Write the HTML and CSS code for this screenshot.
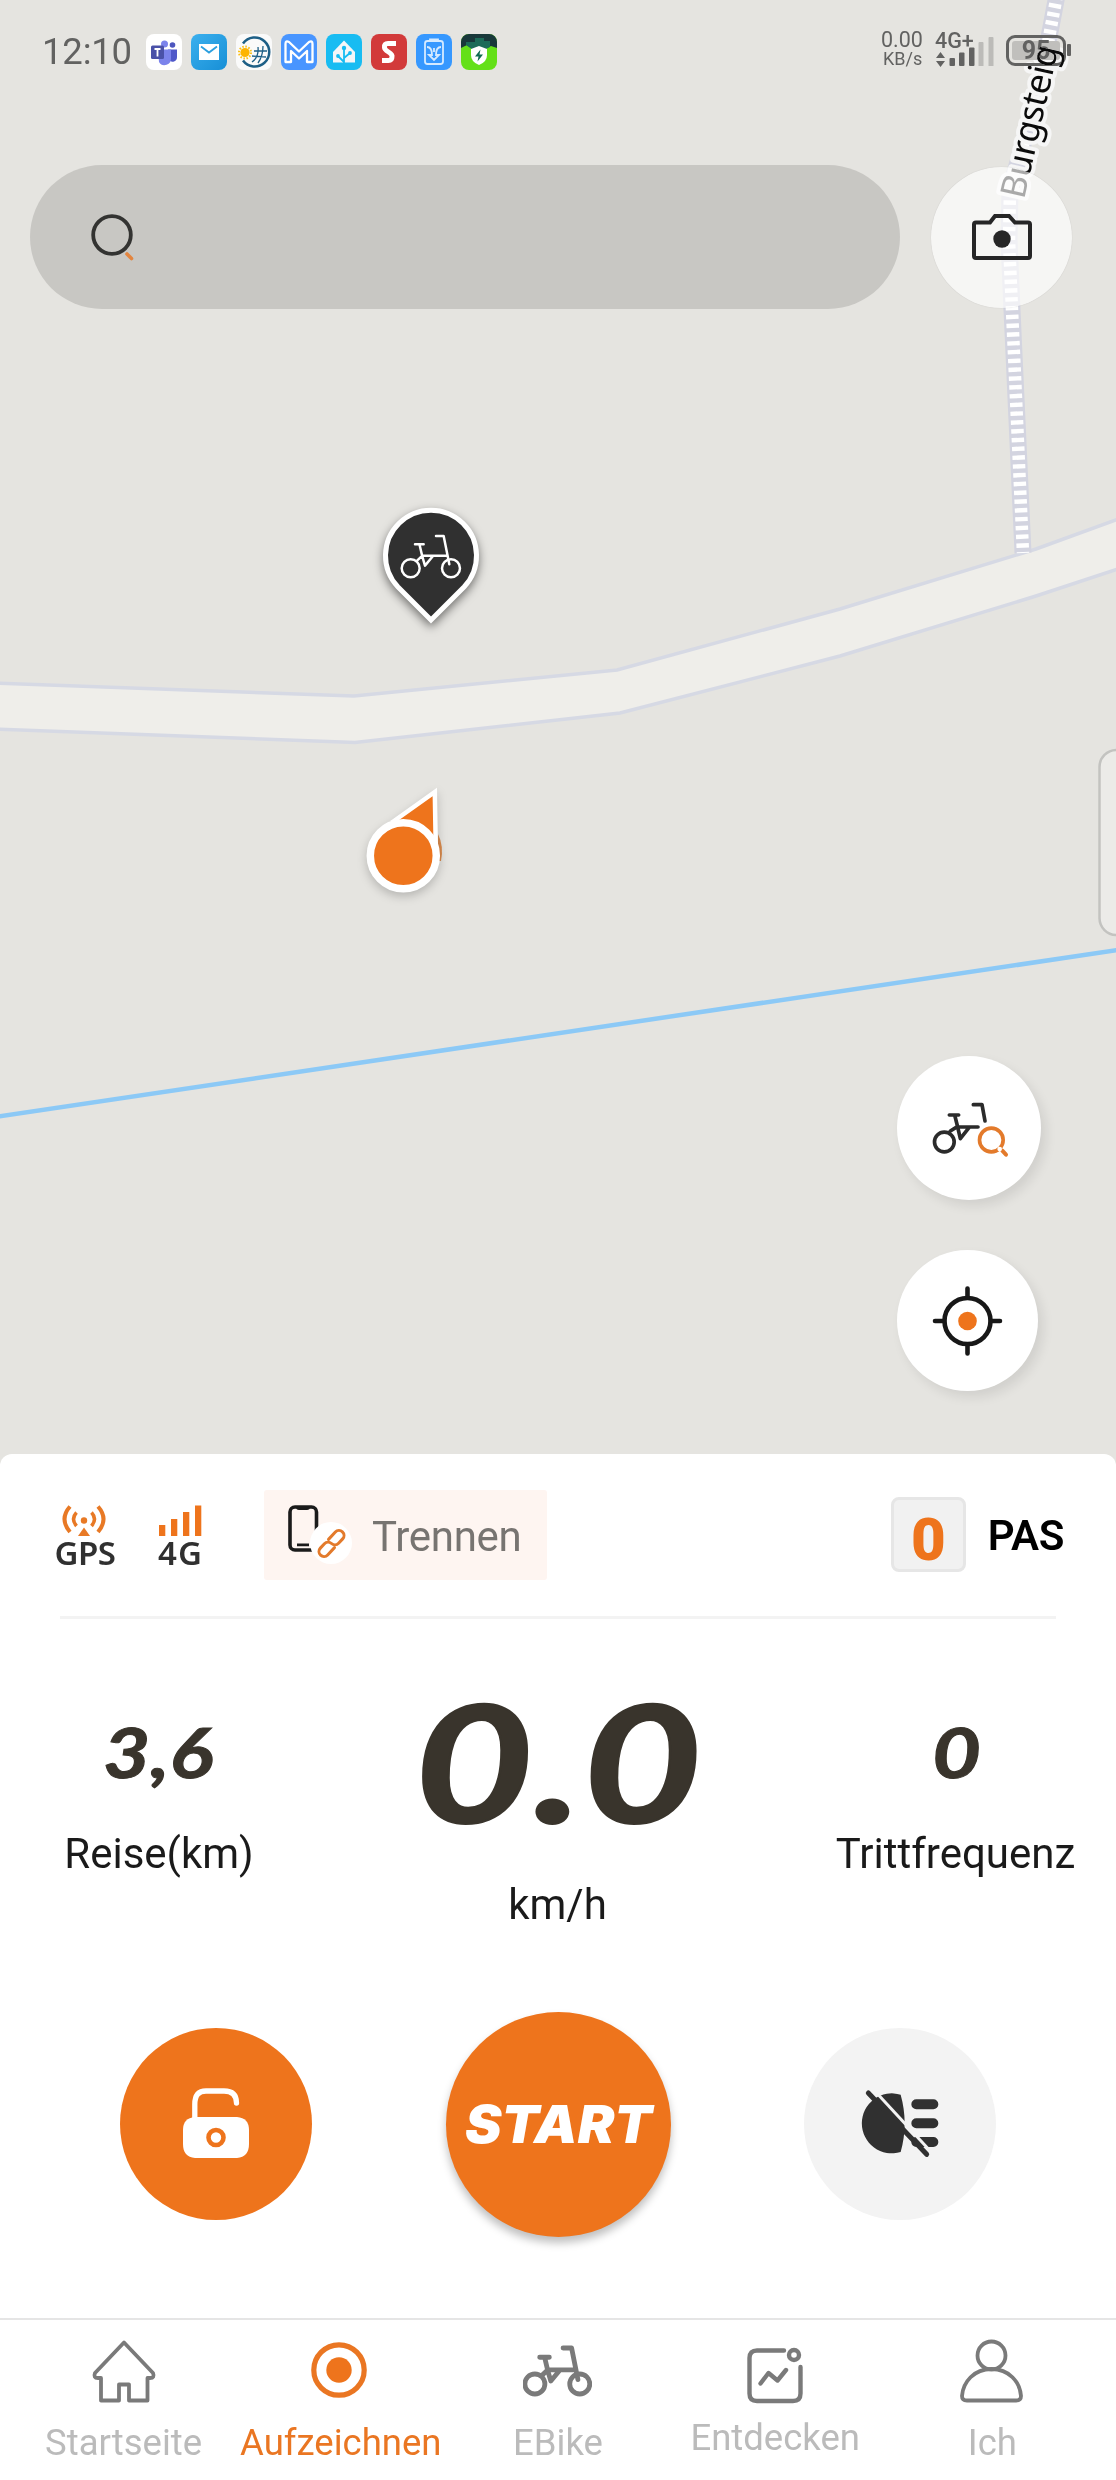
FILE: index.html
```html
<!DOCTYPE html>
<html lang="de">
<head>
<meta charset="utf-8">
<title>Aufzeichnen</title>
<link rel="stylesheet" href="styles.css">
</head>
<body>
<svg class="defs" width="0" height="0">
  <symbol id="bike" viewBox="180 159 186 142">
    <g fill="none" stroke="currentColor" stroke-width="var(--w)" stroke-linecap="round" stroke-linejoin="round">
      <circle cx="212" cy="265" r="27"/><circle cx="333" cy="265" r="27"/>
      <path d="M225 193h26M239 196l8 34 8 27 24-29M232 241l15-14h75M288 168h23l17 85"/>
    </g>
  </symbol>
</svg>

<section class="map">
  <svg class="map-canvas" viewBox="0 0 1116 1454">
    <path d="M-5 683 354 696 617 670 840 609 1036 549 1121 518V568L1036 596 840 656 620 713 355 742.500-5 729Z" fill="#efeeea" stroke="#d6d9e4" stroke-width="3.500"/>
    <g fill="none">
      <path d="M1057-5 1040 85 1010 190 1009 240 1012 310 1023 553" stroke="#d3d4e0" stroke-width="17"/>
      <path d="M1057-5 1040 85 1010 190 1009 240 1012 310 1023 553" stroke="#fff" stroke-width="12.500" stroke-dasharray="4.400 4.400"/>
      <path d="M-5 1117 1121 949.500" stroke="#8cc9f6" stroke-width="4.500"/>
    </g>
    <path id="street" d="M1024 200 1074-20" fill="none"/>
    <text class="street"><textPath href="#street" textLength="156">Burgsteig</textPath></text>
    <rect x="1099.500" y="750" width="40" height="185" rx="17" fill="#eceBe8" stroke="#c3c3c0" stroke-width="2.500"/>
    <g class="pin">
      <path d="M431 620 398 587A45.500 45.500 0 1 1 464 587Z" fill="#303030" stroke="#fff" stroke-width="5"/>
      <use href="#bike" x="400" y="533" width="62" height="47.300" color="#fff" style="--w:7.500"/>
    </g>
    <g>
      <path d="M438 834q6 12 3 27l-4 0Z" fill="#d98a4c"/>
      <g class="dot">
        <path d="M394 821 434.800 792 435.800 850Z" fill="#ee741c" stroke="#fff" stroke-width="4.500"/>
        <circle cx="403.300" cy="855.700" r="33" fill="#ee741c" stroke="#fff" stroke-width="7.500"/>
      </g>
    </g>
  </svg>

  <header class="status">
    <span class="clock">12:10</span>
    <div class="apps">
      <svg viewBox="0 0 36 36"><rect width="36" height="36" rx="8" fill="#fff"/><circle cx="18.500" cy="10" r="3.500" fill="#7b83eb"/><circle cx="26.500" cy="11" r="2.800" fill="#4d56be"/><path d="M22 15.500h9V23a4.500 4.500 0 0 1-8 3z" fill="#4f58c9"/><path d="M12 15.500h13V24a6.500 6.500 0 0 1-12 4z" fill="#7b83eb"/><rect x="5" y="11.500" width="13" height="13.500" rx="1.500" fill="#4a51a8"/><path d="M8.500 15h6M11.500 15v7.500" stroke="#fff" stroke-width="1.800"/></svg>
      <svg viewBox="0 0 36 36"><defs><linearGradient id="mail" x2="1" y2="1"><stop stop-color="#3bb0ee"/><stop offset="1" stop-color="#178fd6"/></linearGradient></defs><rect width="36" height="36" rx="8" fill="url(#mail)"/><path d="M8 10h20v16H8z" fill="#fff"/><path d="M10 12.500l8 6 8-6" fill="none" stroke="#2a9fdf" stroke-width="1.800"/></svg>
      <svg viewBox="0 0 36 36"><rect width="36" height="36" rx="8" fill="#fafafa"/><g fill="none" stroke="#1d5f86"><path d="M7 9.500A14.500 14.500 0 1 1 7 26.500" stroke-width="2.500"/><path d="M18 17h13M16 22l14 1M22 13q1 10-6 15M27 12q0 10-5 17" stroke-width="1.300"/></g><circle cx="9" cy="18.500" r="6" fill="none" stroke="#fdbf0f" stroke-width="2" stroke-dasharray="1.500 1.600"/><circle cx="9" cy="18.500" r="4.600" fill="#fdb400"/></svg>
      <svg viewBox="0 0 36 36"><rect width="36" height="36" rx="8" fill="#4895ff"/><path d="M4.500 28V10q0-4 3.500-2l10 9.500L28 8q3.500-2 3.500 2v18h-5.500V17l-8 7.500-8-7.500v11z" fill="none" stroke="#fff" stroke-width="2.300" stroke-linejoin="round"/></svg>
      <svg viewBox="0 0 36 36"><rect width="36" height="36" rx="8" fill="#18bcf2"/><path d="M18 6.500 29 18v10.500H7V18z" fill="#f4f6f8" stroke-linejoin="round"/><g fill="none" stroke="#18bcf2" stroke-width="1.800"><path d="M18 29V15M18 28l-6-6M18 24l6-5"/></g><g fill="#18bcf2"><circle cx="18" cy="14" r="2.200"/><circle cx="12" cy="22" r="1.900"/><circle cx="24" cy="19" r="1.900"/></g></svg>
      <svg viewBox="0 0 36 36"><rect width="36" height="36" rx="8" fill="#d23a3a"/><path d="M25 9.500H17q-4 0-3.500 4 0 2 4 4.500t3.500 4.500q0 4-3.500 4H11" fill="none" stroke="#fff" stroke-width="5"/></svg>
      <svg viewBox="0 0 36 36"><rect width="36" height="36" rx="8" fill="#3698ff"/><g fill="none" stroke="#d5eaff" stroke-width="1.800"><path d="M14 7V5.500h8V7"/><rect x="9" y="7" width="18" height="23" rx="2.500"/><path d="M11 13q5 0 5 8h-3l5 5 5-5h-3q0-8 5-8M18 14v4"/></g></svg>
      <svg viewBox="0 0 36 36"><rect width="36" height="36" rx="8" fill="#64e018"/><path d="M0 14V8a8 8 0 0 1 8-8h20a8 8 0 0 1 8 8v6l-6-2-7 3H12l-6-4z" fill="#18383a"/><path d="M14 4h9v3h6v6l-6 3H12L5 11V8h9z" fill="#1c6b58"/><path d="M18 12l8 3v6q0 7-8 10-8-3-8-10v-6z" fill="#fff"/><path d="M19.500 15.500l-5.500 7h3.500l-1 5 5.500-7h-3.500z" fill="#116b54"/></svg>
    </div>
    <div class="signals">
      <div class="rate"><span>0.00</span><small>KB/s</small></div>
      <div class="cell">
        <span>4G+</span>
        <svg width="46" height="32" viewBox="0 0 46 32"><g fill="#626261"><path d="M4.500 17l4.500 6H0zM0 26h9l-4.500 6z"/><rect x="13.500" y="23" width="5.500" height="8" rx="1"/><rect x="23" y="17.500" width="5.500" height="13.500" rx="1"/><rect x="33" y="12.500" width="5.500" height="18.500" rx="1"/></g></svg>
        <svg class="weak" width="16" height="30" viewBox="0 0 16 30"><path d="M.5 6q0-1 1-1h3q1 0 1 1v23H.5zM10.500 1q0-1 1-1h3q1 0 1 1v28h-5z" fill="#bcbbb8"/></svg>
      </div>
      <div class="battery"><span>95</span></div>
    </div>
  </header>

  <div class="search-row">
    <div class="search">
      <svg width="46" height="50" viewBox="0 0 46 50"><circle cx="22" cy="23" r="18.800" fill="none" stroke="#333331" stroke-width="3.800"/><path d="M37 42l4.500 4.500" stroke="#e3853f" stroke-width="3.600" stroke-linecap="round"/></svg>
    </div>
    <button class="camera">
      <svg width="60" height="48" viewBox="0 0 60 48"><path d="M4 9.500H18L23 3H37L43 9.500H56Q58 9.500 58 11.500V43Q58 45 56 45H4Q2 45 2 43V11.500Q2 9.500 4 9.500Z" fill="none" stroke="#262626" stroke-width="4"/><circle cx="30" cy="26" r="8.700" fill="#262626"/></svg>
    </button>
  </div>

  <div class="floating">
    <button class="find">
      <svg width="76" height="56" viewBox="213 215 228 168" fill="none" stroke-linecap="round" stroke-linejoin="round">
        <g stroke="#2b2b2b" stroke-width="11"><circle cx="253" cy="341" r="29.500"/><path d="M268 260h28M284 260l9 36 8 35 26-33M271 308l21-13M294 296h60M340 229h26l9 49"/></g>
        <g stroke="#e37a2b"><circle cx="394" cy="335" r="35.500" stroke-width="11"/><path d="M427 367l11 12" stroke-width="12"/></g><circle cx="419" cy="362" r="7" fill="#fff"/>
      </svg>
    </button>
    <button class="locate">
      <svg width="70" height="70" viewBox="0 0 70 70"><g fill="none" stroke="#181818" stroke-width="4.600" stroke-linecap="round"><circle cx="34.500" cy="35" r="23"/><path d="M34.500 2.500v9M34.500 58.500v9M2 35h9M58 35h9"/></g><circle cx="34.500" cy="35" r="9.300" fill="#ee741c"/></svg>
    </button>
  </div>
</section>

<main class="sheet">
  <div class="device">
    <div class="tag gps">
      <svg width="44" height="31" viewBox="1 0 44 31"><g fill="none" stroke="#e87925" stroke-width="4"><path d="M8 1.500Q-3 14 8 27M36 1.500q11 12.500 0 25.500"/><path d="M14.500 7.500q-6 6.500 0 13.500M29.500 7.500q6 6.500 0 13.500" stroke-width="3.500"/></g><circle cx="22" cy="15.500" r="3.200" fill="#e87925"/><path d="M22 22.500l6 8.500H16z" fill="#e87925"/></svg>
      <span>GPS</span>
    </div>
    <div class="tag lte">
      <svg width="44" height="31" viewBox="0 0 44 31" fill="#ee741c"><path d="M1 20h6.300v11H1zM13 14h6.300v17H13zM25 7h6.300v24H25zM37 .5h6.300V31H37z"/></svg>
      <span>4G</span>
    </div>
    <button class="disconnect">
      <svg width="66" height="62" viewBox="0 0 66 62"><rect x="2" y="3" width="26.500" height="43" rx="5" fill="none" stroke="#1b1b1b" stroke-width="3.600"/><path d="M8 3h14q0 3-3 3h-8q-3 0-3-3zM9 39.500h12v2.800H9z" fill="#1b1b1b"/><circle cx="43" cy="39" r="21" fill="#fff"/><g transform="translate(43.500 39.500) rotate(-47)" fill="none" stroke="#e37a2b" stroke-width="3" stroke-linecap="round"><path d="M-1 5h-10a5 5 0 0 1 0-10h6a5 5 0 0 1 5 5M1-5h10a5 5 0 0 1 0 10h-6a5 5 0 0 1-5-5"/></g></svg>
      <span>Trennen</span>
    </button>
    <div class="assist"><b>0</b><span>PAS</span></div>
  </div>

  <div class="stats">
    <div class="stat trip">
      <svg width="124" height="70"><text x="6" y="55" textLength="110" lengthAdjust="spacingAndGlyphs">3,6</text></svg>
      <span>Reise(km)</span>
    </div>
    <div class="stat speed">
      <svg width="300" height="150"><text x="6" y="135.500" textLength="288" lengthAdjust="spacingAndGlyphs">0.0</text></svg>
      <span>km/h</span>
    </div>
    <div class="stat cadence">
      <svg width="60" height="70"><text x="6" y="55" textLength="49" lengthAdjust="spacingAndGlyphs">0</text></svg>
      <span>Trittfrequenz</span>
    </div>
  </div>

  <div class="actions">
    <button class="round lock">
      <svg width="66" height="70" viewBox="0 1 66 70"><path d="M11.800 34V16.500Q11.800 3 23 3H41Q53.500 3 53.500 15" fill="none" stroke="#fff" stroke-width="5.300" stroke-linecap="round"/><path d="M12 29H54Q66 30 66 42V56Q66 69 54 70H12Q0 69 0 56V42Q0 30 12 29Z" fill="#fff"/><circle cx="33" cy="49.500" r="7.500" fill="#fff" stroke="#ee741c" stroke-width="4.600"/></svg>
    </button>
    <button class="round start"><svg width="200" height="60"><text x="7" y="49" textLength="187" lengthAdjust="spacingAndGlyphs">START</text></svg></button>
    <button class="round light">
      <svg width="80" height="68" viewBox="242 270 240 204"><path d="M364 284Q388 370 364 456A90 90 0 1 1 364 284Z" fill="#303030"/><g stroke="#303030" stroke-width="30" stroke-linecap="round"><path d="M411 313h51M411 370h51M411 426h51"/></g><path d="M290 277l160 173" stroke="#f3f3f3" stroke-width="9"/><path d="M267 279l175 184" stroke="#303030" stroke-width="15" stroke-linecap="round"/></svg>
    </button>
  </div>
</main>

<nav class="tabs">
  <a class="tab"><svg width="64" height="64" viewBox="0 0 64 64"><path d="M32 3.500 61 34q2 5-3 5H55.500V61.500H37V45.500H27V61.500H9V39H6q-5 0-3-5Z" fill="none" stroke="#7a7a7a" stroke-width="3.800" stroke-linejoin="round"/></svg><span>Startseite</span></a>
  <a class="tab active"><svg width="64" height="64" viewBox="0 0 64 64"><circle cx="30" cy="31" r="25.200" fill="none" stroke="#ea7622" stroke-width="5.200"/><circle cx="30" cy="31" r="12.700" fill="#ee741c"/></svg><span>Aufzeichnen</span></a>
  <a class="tab"><svg width="72" height="64" viewBox="0 0 72 64"><use href="#bike" x="1" y="5.500" width="69" height="53" style="--w:13"/></svg><span>EBike</span></a>
  <a class="tab raised"><svg width="64" height="64" viewBox="0 0 64 64" fill="none" stroke="#7a7a7a" stroke-width="4.400" stroke-linecap="round" stroke-linejoin="round"><path d="M41 11.500H14Q6.500 11.500 6.500 19V54.500Q6.500 62 14 62H50Q57.500 62 57.500 54.500V28M17.500 44.500 25.500 34l9 7.500L43 31"/><circle cx="51" cy="16" r="5"/></svg><span>Entdecken</span></a>
  <a class="tab"><svg width="64" height="64" viewBox="0 0 64 64" fill="none" stroke="#7a7a7a" stroke-width="3.800"><circle cx="31.500" cy="16.500" r="14"/><path d="M31.500 30C14 30 3 43 2 57q0 4.500 5 4.500H56q5 0 5-4.500C60 43 49 30 31.500 30Z"/></svg><span>Ich</span></a>
</nav>
</body>
</html>
```

FILE: styles.css
```css
* { box-sizing: border-box; }
body {
  margin: 0;
  width: 1116px;
  height: 2480px;
  display: flex;
  flex-direction: column;
  overflow: hidden;
  background: #e5e4e0;
  font-family: Roboto, "Liberation Sans", sans-serif;
  color: #1a1a1a;
}
button { border: 0; padding: 0; font: inherit; display: flex; align-items: center; justify-content: center; }
svg { display: block; flex: none; overflow: visible; }
.defs { position: absolute; }

.map { position: relative; height: 1454px; flex: none; display: flex; flex-direction: column; }
.map-canvas { position: absolute; inset: 0; width: 1116px; height: 1454px; overflow: hidden; }
.street { font: 35px "Noto Sans", sans-serif; fill: #0b0b0b; stroke: #f6f6f6; stroke-width: 8px; stroke-linejoin: round; paint-order: stroke; }
.pin { filter: drop-shadow(0 4px 5px rgba(0, 0, 0, .5)); }
.dot { filter: drop-shadow(0 4px 5px rgba(0, 0, 0, .2)); }

.status { position: relative; height: 104px; padding: 0 45px 0 42px; display: flex; align-items: center; color: #626261; }
.clock { width: 104px; margin-top: -1px; font-size: 36.5px; letter-spacing: -.2px; }
.apps { display: flex; gap: 9px; }
.apps svg { width: 36px; height: 36px; }
.signals { margin-left: auto; height: 36px; display: flex; align-items: center; }
.rate { width: 54px; margin-top: -6px; display: flex; flex-direction: column; font-size: 21.5px; line-height: 20px; }
.rate small { font-size: 18px; line-height: 18px; padding-left: 2px; }
.cell { width: 71px; height: 32px; margin-top: -3px; display: flex; align-items: flex-end; position: relative; }
.cell > span { position: absolute; left: 0; top: -6px; font-size: 21.5px; line-height: 24px; font-weight: 500; }
.cell svg { margin-left: 1px; }
.cell .weak { margin-left: -4px; }
.battery { position: relative; width: 60px; height: 31px; margin: -4px 5px 0 0; padding: 3px; border: 3px solid #626261; border-radius: 9px; background: #c0bfbc; background-clip: content-box; display: flex; align-items: center; justify-content: center; font-size: 25px; font-weight: 700; mix-blend-mode: darken; }
.battery::after { content: ""; position: absolute; left: 58px; top: 6px; width: 4px; height: 12px; border-radius: 1px; background: #626261; }

.search-row { position: relative; margin-top: 61px; padding-left: 30px; display: flex; align-items: center; gap: 31px; }
.search { width: 870px; height: 144px; padding-left: 60px; border-radius: 72px; background: #c8c7c3; display: flex; align-items: center; }
.camera { width: 141px; height: 141px; border-radius: 50%; background: rgba(255, 255, 255, .65); box-shadow: 0 0 1px rgba(0, 0, 0, .2); }

.floating { position: relative; margin: 747px 0 0 897px; display: flex; flex-direction: column; gap: 50px; }
.floating button { border-radius: 50%; background: #fff; box-shadow: 5px 6px 12px rgba(0, 0, 0, .09); }
.floating .find { width: 144px; height: 144px; }
.floating .locate { width: 141px; height: 141px; }

.sheet { height: 864px; flex: none; background: #fff; border-radius: 12px 12px 0 0; }
.device { height: 165px; margin: 0 52px 0 54px; padding-top: 36px; display: flex; align-items: flex-start; position: relative; }
.device::after { content: ""; position: absolute; left: 6px; right: 8px; bottom: 0; height: 3px; background: #f3f3f3; }
.tag { padding-top: 15px; display: flex; flex-direction: column; align-items: center; font: 600 33px/36px "Noto Sans", sans-serif; color: #303030; }
.tag span { margin-top: -1px; }
.gps { width: 62px; }
.gps span { letter-spacing: -.5px; }
.lte { width: 46px; margin-left: 41px; }
.lte span { letter-spacing: 1px; margin-right: -1px; }
.disconnect { width: 283px; height: 90px; margin-left: 61px; border-radius: 3px; background: #fef5f1; color: #777471; font-size: 42px; justify-content: flex-start; padding-left: 24px; gap: 18px; }
.disconnect span { letter-spacing: -.3px; padding-top: 2px; }
.assist { margin: 7px 0 0 auto; display: flex; align-items: center; gap: 22px; font-size: 42px; font-weight: 600; color: #000; letter-spacing: -.4px; }
.assist span { padding-top: 2px; }
.assist b { width: 75px; height: 75px; padding-top: 7px; border: 3px solid #e6e6e6; border-radius: 8px; background: #f1f1f1; color: #ee741c; text-align: center; font-size: 60px; line-height: 66px; letter-spacing: 0; }

.stats { height: 380px; position: relative; display: flex; justify-content: space-between; align-items: flex-start; padding: 0 42px 0 65px; font-size: 42px; line-height: 50px; }
.stat { display: flex; flex-direction: column; align-items: center; }
.stat text { font-family: Lato, sans-serif; font-weight: 700; font-style: italic; font-size: 68.5px; fill: #39342c; stroke: #39342c; stroke-width: 1px; }
.trip, .cadence { padding-top: 104px; width: 188px; }
.cadence { width: 237px; }
.trip > span, .cadence > span { margin-top: 36px; white-space: nowrap; }
.speed { padding-top: 68px; margin-left: 25px; }
.speed text { font-size: 163px; stroke-width: 2px; }
.speed > span { margin-top: 43px; }

.actions { height: 250px; display: flex; align-items: center; justify-content: space-between; padding: 0 120px; }
.round { width: 192px; height: 192px; border-radius: 50%; background: #ee741c; }
.start { width: 225px; height: 225px; box-shadow: 0 6px 9px rgba(0, 0, 0, .25); }
.start text { font: italic 900 52px Inter, Lato, sans-serif; fill: #fff; }
.light { background: #f3f3f3; }

.tabs { height: 162px; flex: none; padding: 19px 15px 0; border-top: 2px solid #e5e5e5; background: #fff; display: grid; grid-template-columns: repeat(5, 1fr); }
.tab { display: flex; flex-direction: column; align-items: center; color: #bbb; font-size: 36.5px; line-height: 44px; }
.tab > svg { color: #7a7a7a; }
.tab > span { margin-top: 18px; }
.tab.active { color: #ea7622; }
.tab.raised > span { margin-top: 13px; }
```
